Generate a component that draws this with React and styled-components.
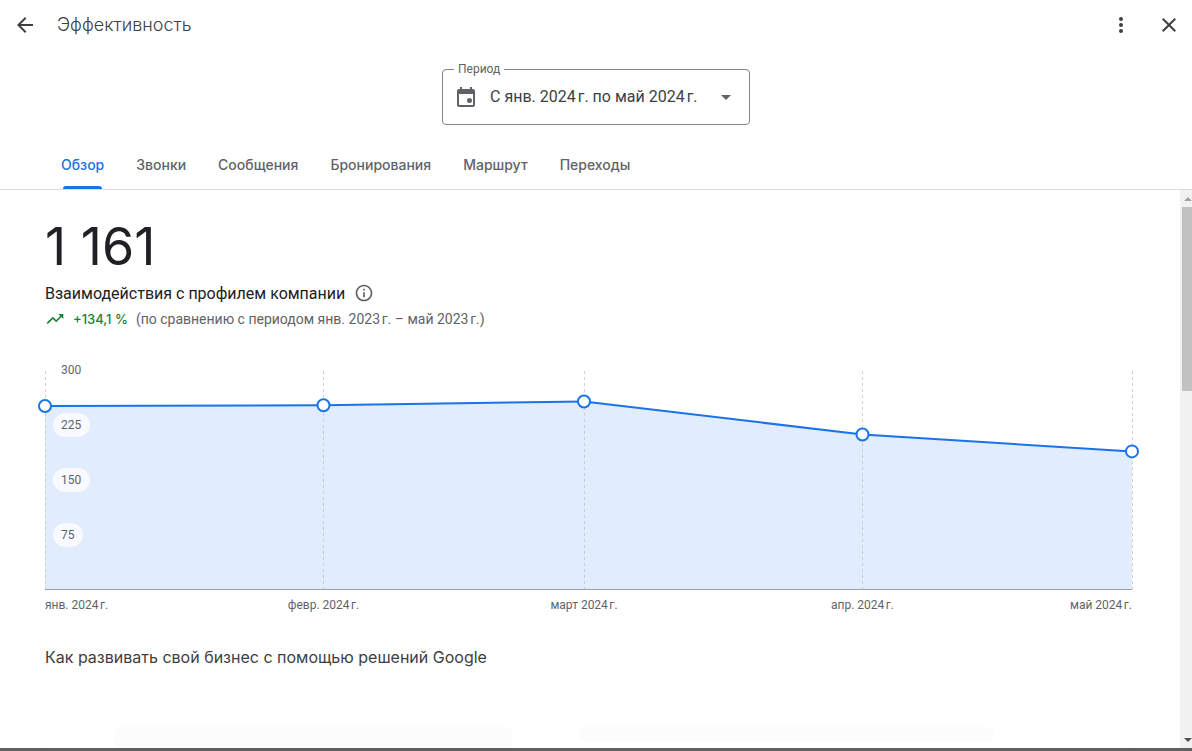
import { useState } from 'react';
import styled, { createGlobalStyle } from 'styled-components';

const GlobalStyle = createGlobalStyle`
  * {
    box-sizing: border-box;
  }
  body {
    margin: 0;
    background: #fff;
    color: #202124;
    font-family: Roboto, 'Liberation Sans', sans-serif;
  }
`;

const heading_font = `Inter, 'Open Sans', sans-serif`;

const Page = styled.div`
  display: flex;
  flex-direction: column;
  height: 100vh;
  border-bottom: 3px solid #5f6160;
`;

const Header = styled.header`
  display: flex;
  align-items: center;
  gap: 8px;
  height: 50px;
  padding: 0 11px 0 13px;
`;

const Title = styled.h1`
  flex: 1;
  margin: 0 0 0 12px;
  font: 300 18px/24px ${heading_font};
  color: #3c4043;
`;

const IconButton = styled.button`
  display: flex;
  padding: 0;
  border: 0;
  background: none;
  color: #3c4043;
  cursor: pointer;
`;

const HeaderActions = styled.div`
  display: flex;
  gap: 24px;
`;

const PeriodField = styled.div`
  position: relative;
  align-self: center;
  display: flex;
  align-items: center;
  width: 308px;
  height: 56px;
  margin-top: 19px;
  padding: 0 11px;
  border: 1px solid #80868b;
  border-radius: 4px;
  color: #5f6368;
`;

const PeriodLabel = styled.label`
  position: absolute;
  top: -9px;
  left: 11px;
  padding: 0 4px;
  background: #fff;
  font-size: 12px;
  line-height: 16px;
`;

const PeriodSelect = styled.select`
  flex: 1;
  min-width: 0;
  margin-left: 12px;
  padding: 0;
  border: 0;
  background: none;
  appearance: none;
  font: 400 16px/24px Roboto, sans-serif;
  color: #3c4043;
`;

const Tabs = styled.nav`
  display: flex;
  flex-shrink: 0;
  height: 49px;
  margin-top: 16px;
  padding: 0 45px;
  border-bottom: 1px solid #dadce0;
`;

const Tab = styled.button`
  position: relative;
  padding: 0 16px;
  border: 0;
  background: none;
  font: 500 14px/20px ${heading_font};
  color: ${(props) => (props.$active ? '#1a73e8' : '#5f6368')};
  cursor: pointer;

  &::after {
    content: '';
    position: absolute;
    right: 18px;
    bottom: 0;
    left: 18px;
    height: 3px;
    border-radius: 3px 3px 0 0;
    background: ${(props) => (props.$active ? '#1a73e8' : 'none')};
  }
`;

const Body = styled.div`
  display: flex;
  flex: 1;
  min-height: 0;
`;

const Content = styled.main`
  flex: 1;
  min-width: 0;
  padding: 25px 48px 0 45px;
  overflow: hidden;
`;

const Total = styled.div`
  font: 400 52px/64px ${heading_font};
`;

const Metric = styled.div`
  display: flex;
  align-items: center;
  gap: 9px;
  height: 24px;
  margin-top: 2px;
  font-size: 16px;
  color: #202124;

  svg {
    color: #5f6368;
  }
`;

const Trend = styled.div`
  display: flex;
  align-items: center;
  gap: 8px;
  height: 28px;
  font-size: 14px;
  color: #5f6368;
`;

const Growth = styled.span`
  display: flex;
  align-items: center;
  gap: 8px;
  font: 500 13px/20px ${heading_font};
  color: #188038;
`;

const ChartSvg = styled.svg`
  display: block;
  width: 100%;
  height: 260px;
  margin-top: 37px;
  overflow: visible;
  font-size: 12px;

  text {
    fill: #5f6368;
  }
`;

const Subheading = styled.h2`
  margin: 15px 0 0;
  font: 400 16px/24px ${heading_font};
  color: #3c4043;
`;

const Card = styled.section`
  display: grid;
  grid-template-columns: 397fr 416fr;
  gap: 67px;
  height: 200px;
  margin-top: 20px;
  padding: 37px 136px 0 69px;
  border: 1px solid #fdfdfd;
`;

const Placeholder = styled.div`
  height: ${(props) => props.$height}px;
  border-radius: 8px;
  background: #fcfcfc;
`;

const ScrollTrack = styled.div`
  display: flex;
  flex-direction: column;
  align-items: flex-end;
  width: 12px;
  background: #f1f1f1;
`;

const ScrollThumb = styled.div`
  width: 10px;
  height: 184px;
  margin-bottom: auto;
  background: #c1c1c1;
`;

const BackIcon = () => (
  <svg width='24' height='24' viewBox='0 0 24 24' fill='currentColor'>
    <path d='M20 11H7.83l5.59-5.59L12 4l-8 8 8 8 1.41-1.41L7.83 13H20v-2z' />
  </svg>
);

const MoreIcon = () => (
  <svg width='24' height='24' viewBox='0 0 24 24' fill='currentColor'>
    <circle cx='12' cy='6' r='2' />
    <circle cx='12' cy='12' r='2' />
    <circle cx='12' cy='18' r='2' />
  </svg>
);

const CloseIcon = () => (
  <svg width='24' height='24' viewBox='0 0 24 24' fill='currentColor'>
    <path d='M19 6.41 17.59 5 12 10.59 6.41 5 5 6.41 10.59 12 5 17.59 6.41 19 12 13.41 17.59 19 19 17.59 13.41 12z' />
  </svg>
);

const CalendarIcon = () => (
  <svg width='24' height='24' viewBox='0 0 24 24' fill='currentColor'>
    <path d='M19 4h-1V2h-2v2H8V2H6v2H5c-1.11 0-2 .9-2 2v14c0 1.1.89 2 2 2h14c1.1 0 2-.9 2-2V6c0-1.1-.9-2-2-2zm0 16H5V9h14v11z' />
    <circle cx='15.5' cy='15.5' r='2.5' />
  </svg>
);

const DropIcon = () => (
  <svg width='24' height='24' viewBox='0 0 24 24' fill='currentColor'>
    <path d='M7 10l5 5 5-5z' />
  </svg>
);

const InfoIcon = () => (
  <svg width='20' height='20' viewBox='0 0 24 24' fill='currentColor'>
    <path d='M11 7h2v2h-2zm0 4h2v6h-2zm1-9C6.48 2 2 6.48 2 12s4.48 10 10 10 10-4.48 10-10S17.52 2 12 2zm0 18c-4.41 0-8-3.59-8-8s3.59-8 8-8 8 3.59 8 8-3.59 8-8 8z' />
  </svg>
);

const TrendIcon = () => (
  <svg width='20' height='20' viewBox='0 0 24 24' fill='currentColor'>
    <path d='m16 6 2.29 2.29-4.88 4.88-4-4L2 16.59 3.41 18l6-6 4 4 6.3-6.29L22 12V6z' />
  </svg>
);

const ScrollArrow = ({ down }) => (
  <svg width='10' height='17' viewBox='0 0 10 17'>
    {down ? (
      <path d='M2 7h8l-4 4z' fill='#505050' />
    ) : (
      <path d='M2 11h8l-4-4z' fill='#a3a3a3' />
    )}
  </svg>
);

const tabs = [
  'Обзор',
  'Звонки',
  'Сообщения',
  'Бронирования',
  'Маршрут',
  'Переходы',
];

// day = days since January 1st
const points = [
  { label: 'янв. 2024\u202fг.', day: 0, value: 251 },
  { label: 'февр. 2024\u202fг.', day: 31, value: 252 },
  { label: 'март 2024\u202fг.', day: 60, value: 257 },
  { label: 'апр. 2024\u202fг.', day: 91, value: 212 },
  { label: 'май 2024\u202fг.', day: 121, value: 189 },
];

const ticks = [300, 225, 150, 75];
const plot_height = 220;
const axis_y = plot_height - 1;

const get_x = (day) => (day / 121) * 100;
const get_y = (value) => plot_height * (1 - value / 300);
const get_anchor = (i) => {
  if (i === 0) return 'start';
  return i === points.length - 1 ? 'end' : 'middle';
};

const Chart = () => {
  const line = points.map((p) => `${get_x(p.day)},${get_y(p.value)}`).join(' ');
  return (
    <ChartSvg role='img' aria-label='Взаимодействия с профилем компании'>
      <svg
        width='100%'
        height={plot_height}
        viewBox={`0 0 100 ${plot_height}`}
        preserveAspectRatio='none'
      >
        <polygon
          points={`0,${axis_y} ${line} 100,${axis_y}`}
          fill='#e1ecfd'
        />
      </svg>
      {points.map((p) => (
        <line
          key={p.day}
          x1={`${get_x(p.day)}%`}
          x2={`${get_x(p.day)}%`}
          y1='1'
          y2={axis_y}
          stroke='#bdc1c6'
          strokeOpacity='0.7'
          strokeDasharray='3 3'
          shapeRendering='crispEdges'
        />
      ))}
      <line
        x1='0'
        x2='100%'
        y1={axis_y}
        y2={axis_y}
        stroke='#9aa0a6'
        shapeRendering='crispEdges'
      />
      {points.slice(1).map((p, i) => (
        <line
          key={p.day}
          x1={`${get_x(points[i].day)}%`}
          y1={get_y(points[i].value)}
          x2={`${get_x(p.day)}%`}
          y2={get_y(p.value)}
          stroke='#1a73e8'
          strokeWidth='2'
        />
      ))}
      {points.map((p, i) => (
        <g key={p.day}>
          <circle
            cx={`${get_x(p.day)}%`}
            cy={get_y(p.value)}
            r='6'
            fill='#fff'
            stroke='#1a73e8'
            strokeWidth='2'
          />
          <text x={`${get_x(p.day)}%`} y='239' textAnchor={get_anchor(i)}>
            {p.label}
          </text>
        </g>
      ))}
      {ticks.map((tick) => (
        <g key={tick}>
          <rect
            x='8'
            y={get_y(tick) - 12}
            width={tick < 100 ? 30 : 37}
            height='24'
            rx='12'
            fill='#fff'
            fillOpacity='0.75'
          />
          <text x='16' y={get_y(tick) + 4}>
            {tick}
          </text>
        </g>
      ))}
    </ChartSvg>
  );
};

export default function App() {
  const [active, setActive] = useState(tabs[0]);

  return (
    <Page>
      <GlobalStyle />
      <Header>
        <IconButton aria-label='Назад'>
          <BackIcon />
        </IconButton>
        <Title>Эффективность</Title>
        <HeaderActions>
          <IconButton aria-label='Ещё'>
            <MoreIcon />
          </IconButton>
          <IconButton aria-label='Закрыть'>
            <CloseIcon />
          </IconButton>
        </HeaderActions>
      </Header>

      <PeriodField>
        <PeriodLabel htmlFor='period'>Период</PeriodLabel>
        <CalendarIcon />
        <PeriodSelect id='period'>
          <option>{'С янв. 2024\u202fг. по май 2024\u202fг.'}</option>
        </PeriodSelect>
        <DropIcon />
      </PeriodField>

      <Tabs>
        {tabs.map((tab) => (
          <Tab key={tab} $active={tab === active} onClick={() => setActive(tab)}>
            {tab}
          </Tab>
        ))}
      </Tabs>

      <Body>
        <Content>
          <Total>{'1\u00a0161'}</Total>
          <Metric>
            Взаимодействия с профилем компании
            <InfoIcon />
          </Metric>
          <Trend>
            <Growth>
              <TrendIcon />
              {'+134,1\u00a0%'}
            </Growth>
            {'(по сравнению с периодом янв. 2023\u202fг. – май 2023\u202fг.)'}
          </Trend>
          <Chart />
          <Subheading>Как развивать свой бизнес с помощью решений Google</Subheading>
          <Card>
            <Placeholder $height={40} />
            <Placeholder $height={15} />
          </Card>
        </Content>
        <ScrollTrack>
          <ScrollArrow />
          <ScrollThumb />
          <ScrollArrow down />
        </ScrollTrack>
      </Body>
    </Page>
  );
}
